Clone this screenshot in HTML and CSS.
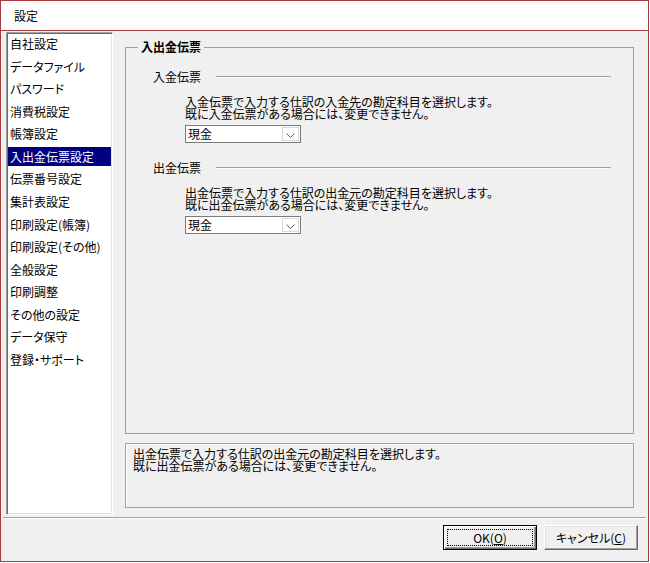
FILE: index.html
```html
<!DOCTYPE html>
<html lang="ja">
<head>
<meta charset="utf-8">
<title>設定</title>
<link rel="stylesheet" href="styles.css">
</head>
<body>
<div class="window">
  <div class="titlebar">設定</div>
  <div class="client">
    <div class="main">
      <ul class="list">
        <li>自社設定</li>
        <li>データファイル</li>
        <li>パスワード</li>
        <li>消費税設定</li>
        <li>帳簿設定</li>
        <li class="selected">入出金伝票設定</li>
        <li>伝票番号設定</li>
        <li>集計表設定</li>
        <li>印刷設定(帳簿)</li>
        <li>印刷設定(その他)</li>
        <li>全般設定</li>
        <li>印刷調整</li>
        <li>その他の設定</li>
        <li>データ保守</li>
        <li>登録・サポート</li>
      </ul>
      <div class="pane">
        <fieldset class="group">
          <legend>入出金伝票</legend>
          <div class="group-body">
            <section class="sub">
              <div class="sub-head"><span>入金伝票</span><div class="rule"></div></div>
              <p class="desc"><span class="line">入金伝票で入力する仕訳の入金先の勘定科目を選択します。</span><span class="line">既に入金伝票がある場合には、変更できません。</span></p>
              <div class="combo"><span class="combo-value">現金</span><span class="combo-btn"><svg width="9" height="5" viewBox="0 0 9 5"><polyline points="0.5,0.5 4.5,4.5 8.5,0.5" fill="none" stroke="#606060" stroke-width="1"/></svg></span></div>
            </section>
            <section class="sub">
              <div class="sub-head"><span>出金伝票</span><div class="rule"></div></div>
              <p class="desc"><span class="line">出金伝票で入力する仕訳の出金元の勘定科目を選択します。</span><span class="line">既に出金伝票がある場合には、変更できません。</span></p>
              <div class="combo"><span class="combo-value">現金</span><span class="combo-btn"><svg width="9" height="5" viewBox="0 0 9 5"><polyline points="0.5,0.5 4.5,4.5 8.5,0.5" fill="none" stroke="#606060" stroke-width="1"/></svg></span></div>
            </section>
          </div>
        </fieldset>
        <div class="help"><span class="line">出金伝票で入力する仕訳の出金元の勘定科目を選択します。</span><span class="line">既に出金伝票がある場合には、変更できません。</span></div>
      </div>
    </div>
    <div class="sep"></div>
    <div class="buttons">
      <button class="btn default"><span class="focus">OK(<u>O</u>)</span></button>
      <button class="btn"><span class="label">キャンセル(<u>C</u>)</span></button>
    </div>
  </div>
</div>
</body>
</html>
```

FILE: styles.css
```css
* { box-sizing: border-box; }
html, body {
  margin: 0;
  padding: 0;
  background: #ffffff;
}
body {
  font-family: "Noto Sans CJK JP", "Noto Sans", sans-serif;
  font-size: 12px;
  color: #000;
  font-feature-settings: "palt";
}
.window {
  width: 649px;
  height: 562px;
  border: 1px solid #a83a3a;
  display: flex;
  flex-direction: column;
}
.titlebar {
  height: 30px;
  line-height: 29px;
  padding-left: 13px;
  background: #fff;
  border-bottom: 1px solid #a83a3a;
  font-size: 12px;
}
.client {
  flex: 1;
  background: #f0f0f0;
  display: flex;
  flex-direction: column;
}
.main {
  display: flex;
  padding: 1px 14px 2px 5px;
  height: 486px;
}
.list {
  list-style: none;
  margin: 0;
  padding: 0 1px 0 0;
  width: 107px;
  height: 483px;
  background: #fff;
  border: 1px solid;
  border-color: #a0a0a0 #fff #fff #a0a0a0;
  box-shadow: inset 1px 1px 0 #696969, inset -1px -1px 0 #e3e3e3;
  display: flex;
  flex-direction: column;
  gap: 3.57px;
  padding-top: 1px;
}
.list li {
  height: 19px;
  line-height: 19px;
  padding-left: 2px;
  margin-left: 1px;
  white-space: nowrap;
}
.list li.selected {
  background: #000080;
  color: #fff;
}
.pane {
  flex: 1;
  margin-left: 12px;
  padding-top: 8px;
  padding-bottom: 7px;
  display: flex;
  flex-direction: column;
}
.group {
  flex: 1;
  min-height: 0;
  margin: 0;
  padding: 0;
  border: 1px solid #a0a0a0;
  min-width: 0;
}
.group legend {
  margin-left: 12px;
  padding: 0 3px;
  font-weight: bold;
  line-height: 14px;
  height: 14px;
}
.group-body {
  padding: 16px 22px 0 27px;
}
.sub + .sub {
  margin-top: 18px;
}
.sub-head {
  display: flex;
  align-items: center;
  height: 14px;
  line-height: 14px;
}
.rule {
  flex: 1;
  margin-left: 15px;
  height: 2px;
  border-top: 1px solid #a0a0a0;
  border-bottom: 1px solid #fff;
  border-right: 1px solid #a0a0a0;
}
.line {
  display: block;
  height: 12px;
  line-height: 12px;
  overflow: visible;
}
.desc {
  margin: 12px 0 0 32px;
  white-space: nowrap;
}
.combo {
  margin: 5px 0 0 32px;
  width: 116px;
  height: 18px;
  background: #fff;
  border: 1px solid #7a7a7a;
  display: flex;
  align-items: stretch;
}
.combo-value {
  flex: 1;
  padding-left: 2px;
  line-height: 16px;
}
.combo-btn {
  width: 17px;
  margin: 1px 1px 1px 0;
  border: 1px solid #d9d9d9;
  background: #fff;
  display: flex;
  align-items: center;
  justify-content: center;
  padding-top: 3px;
}
.help {
  margin-top: 9px;
  height: 65px;
  border: 1px solid #a0a0a0;
  box-shadow: inset 1px 1px 0 #fff;
  padding: 4px 7px;
  white-space: nowrap;
}
.sep {
  height: 2px;
  margin: 0 2px;
  border-top: 1px solid #a0a0a0;
  border-bottom: 1px solid #fff;
}
.buttons {
  flex: 1;
  display: flex;
  justify-content: flex-end;
  align-items: flex-start;
  gap: 7px;
  padding: 6px 10px 0 0;
}
.btn {
  width: 94px;
  height: 25px;
  padding: 0;
  margin: 0;
  font-family: inherit;
  font-size: 12px;
  font-feature-settings: "palt";
  color: #000;
  background: #f0f0f0;
  border: 1px solid;
  border-color: #fff #696969 #696969 #fff;
  box-shadow: inset -1px -1px 0 #a0a0a0, inset 1px 1px 0 #e3e3e3;
  display: flex;
  align-items: stretch;
  justify-content: stretch;
}
.btn.default {
  border: 1px solid #000;
  box-shadow: inset 1px 1px 0 #fff, inset -1px -1px 0 #696969, inset -2px -2px 0 #a0a0a0;
  padding: 3px;
}
.btn .focus,
.btn .label {
  flex: 1;
  display: flex;
  align-items: center;
  justify-content: center;
}
.btn .focus {
  border: 1px dotted #000;
}
.btn u {
  text-decoration: underline;
  text-underline-offset: 1px;
}
```
